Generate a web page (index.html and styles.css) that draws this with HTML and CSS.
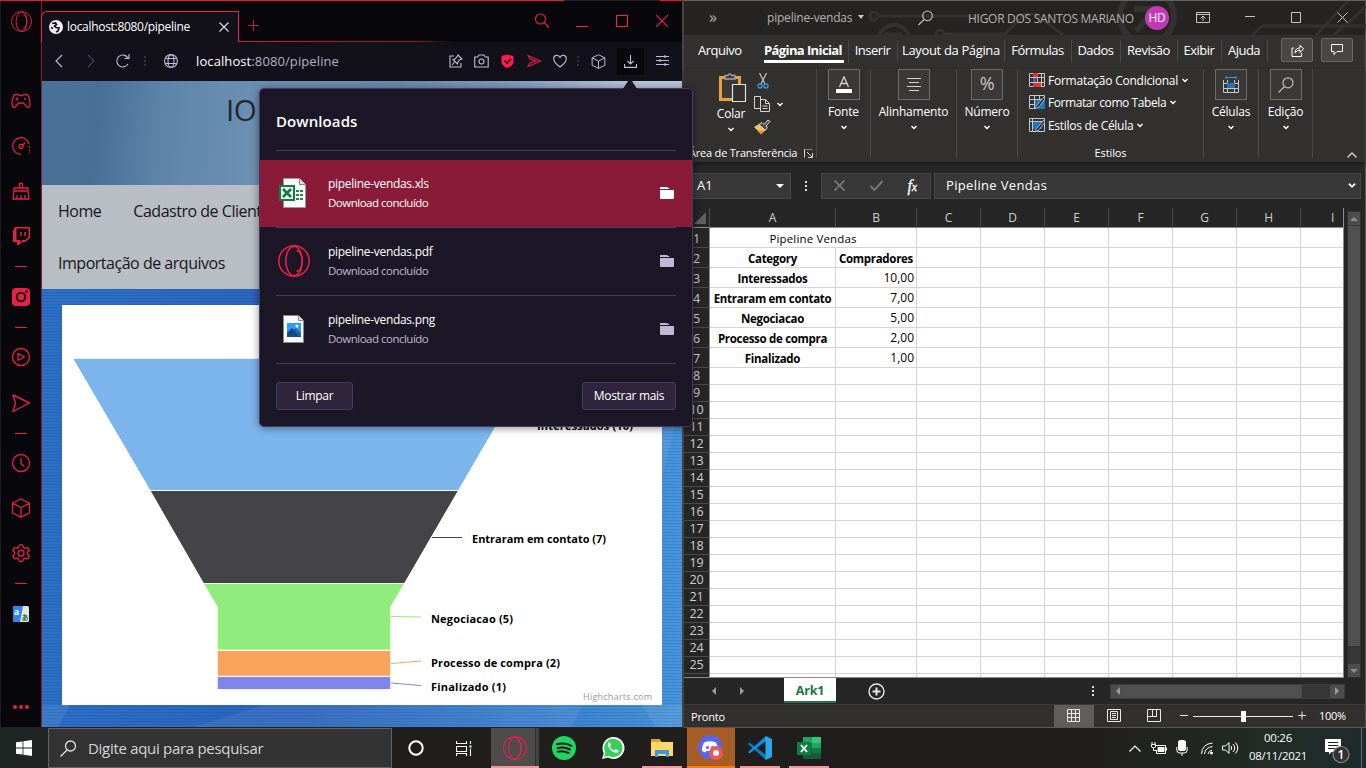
FILE: index.html
```html
<!DOCTYPE html>
<html lang="pt-BR">
<head>
<meta charset="utf-8">
<title>Pipeline</title>
<link rel="stylesheet" href="styles.css">
</head>
<body>
<svg class="defs" width="0" height="0">
  <symbol id="opera" viewBox="0 0 32 32"><g fill="none" stroke="currentColor"><circle cx="16" cy="16" r="15.2" stroke-width="1.5"/><ellipse cx="16" cy="16" rx="8.2" ry="14.6" stroke-width="1.5"/><path d="M18.500 5.500c7.500 1.500 7.500 19.500 0 21" stroke-width="1.400"/></g></symbol>
  <symbol id="chev" viewBox="0 0 8 5"><path d="M1.500 1 4 3.500 6.500 1" fill="none" stroke="currentColor" stroke-width="1.400"/></symbol>
  <symbol id="folder" viewBox="0 0 14 12"><path d="M0 0h7l3 2H0zM0 3h13.500q.5 0 .5.500V11q0 1-1 1H1q-1 0-1-1z" fill="currentColor"/></symbol>
  <symbol id="send" viewBox="0 0 20 20"><path d="M2 2 18.500 10 2 18.500 4.500 10z" fill="none" stroke="currentColor" stroke-width="1.400" stroke-linejoin="round"/></symbol>
  <symbol id="cube" viewBox="0 0 20 20"><path d="M10 1 18.500 5v10L10 19.200 1.500 15V5zM1.500 5 10 9.500 18.500 5M10 9.500v9.500" fill="none" stroke="currentColor" stroke-width="1.300" stroke-linejoin="round"/></symbol>
</svg>
<main class="windows">
  <section class="opera">
    <aside class="side">
      <div class="s-logo"><svg width="21" height="21"><use href="#opera"/></svg></div>
      <div class="s-item"><svg width="20" height="16" viewBox="0 0 20 16" class="ln"><path d="M4.500 1.500h3l1 1.200h3l1-1.200h3c2 0 3.500 5 3.500 9 0 3-1 4-2.200 4-2 0-3-4.500-4.800-4.500H8c-1.800 0-2.800 4.500-4.800 4.500C2 14.500 1 13.500 1 10.500c0-4 1.500-9 3.500-9zM6 4.500v3M4.500 6h3M13 6h2"/></svg></div>
      <div class="s-item"><svg width="20" height="20" viewBox="0 0 20 20" class="ln"><path d="M10 18.300A8.300 8.300 0 1 1 18 8M11 10l3-3.500"/><circle cx="10" cy="10.500" r="2"/><path d="M18.500 10.500v7" stroke-dasharray="1.500 1.500"/></svg></div>
      <div class="s-item"><svg width="20" height="18" viewBox="0 0 20 18" class="ln"><path d="M8.500 6V1.500h3V6M3 9V6h14v3H3L2 17h16l-1-8M6 13v4M10 13v4M14 13v4"/></svg></div>
      <div class="s-item"><svg width="18" height="18" viewBox="0 0 18 18"><path d="M3 0h15v11l-5 4h-3l-3 3H5v-3H1V4z" fill="#e4204b"/><path d="M4.500 1.500h12V10l-3 3h-3l-2.500 2V13H4.500z" fill="#0a080d"/><path d="M9 5v4M13 5v4" stroke="#e4204b" stroke-width="1.500"/></svg></div>
      <div class="s-line"></div>
      <div class="s-item tall"><svg width="18" height="18" viewBox="0 0 18 18"><rect width="18" height="18" rx="4" fill="#e4204b"/><circle cx="9" cy="9" r="4.200" fill="none" stroke="#16070d" stroke-width="2"/><circle cx="14.500" cy="3.500" r="1.200" fill="#16070d"/></svg></div>
      <div class="s-line"></div>
      <div class="s-item"><svg width="20" height="20" viewBox="0 0 20 20" class="ln"><circle cx="10" cy="10" r="8.500"/><path d="M7 6.500 13.500 9.800 7 13.500z"/></svg></div>
      <div class="s-item tall"><svg width="20" height="20"><use href="#send"/></svg></div>
      <div class="s-line"></div>
      <div class="s-item"><svg width="20" height="20" viewBox="0 0 20 20" class="ln"><circle cx="10" cy="10" r="8.500"/><path d="M10 5v5.500l3 2.500"/></svg></div>
      <div class="s-item"><svg width="20" height="20"><use href="#cube"/></svg></div>
      <div class="s-item"><svg width="20" height="20" viewBox="0 0 20 20" class="ln"><path d="M8.300 1.800h3.400l.6 2.600 1.800 1 2.500-.8 1.700 3-1.900 1.700v1.900l1.900 1.700-1.700 3-2.500-.8-1.800 1-.6 2.300H8.300l-.6-2.300-1.800-1-2.500.8-1.700-3 1.900-1.700V9.300L1.700 7.600l1.700-3 2.500.8 1.800-1z"/><circle cx="10" cy="10.200" r="3"/></svg></div>
      <div class="s-line"></div>
      <div class="s-item last"><svg width="16" height="16" viewBox="0 0 16 16"><rect width="16" height="16" rx="1.500" fill="#e6e6e6"/><path d="M1.500 0H10L7 16H1.500Q0 16 0 14.500v-13Q0 0 1.500 0z" fill="#2f86e8"/><text x="1" y="9" class="tr-a">a</text><text x="8.500" y="14" class="tr-b">あ</text></svg></div>
      <div class="s-dots"><i></i><i></i><i></i></div>
    </aside>
    <div class="browser">
      <div class="tabbar">
        <div class="tab">
          <svg width="14" height="14" viewBox="0 0 14 14"><circle cx="7" cy="7" r="7" fill="#f2f0f5"/><path d="M3 3.500 6.500 3 7.500 4.500 5.500 6 7 7.500 10 8 9 11 7 12M2 7.500l2 1" fill="none" stroke="#14111a" stroke-width="1.700"/></svg>
          <span class="tab-title">localhost:8080/pipeline</span>
          <svg class="tab-x" width="10" height="10" viewBox="0 0 10 10"><path d="M.5.500l9 9M9.500.500l-9 9" stroke="#dcd9e2" stroke-width="1.200"/></svg>
        </div>
        <div class="tab-rest">
          <svg class="plus" width="11" height="11" viewBox="0 0 11 11"><path d="M5.500 0v11M0 5.500h11" stroke="#b41f42"/></svg>
          <div class="winbtns">
            <svg width="16" height="16" viewBox="0 0 16 16" class="wb"><circle cx="6.500" cy="6" r="5"/><path d="m10.200 9.700 4.800 4.800"/></svg>
            <svg width="12" height="12" viewBox="0 0 12 12" class="wb"><path d="M0 11.500h12"/></svg>
            <svg width="12" height="12" viewBox="0 0 12 12" class="wb"><path d="M.5.500h11v11H.5z"/></svg>
            <svg width="12" height="12" viewBox="0 0 12 12" class="wb"><path d="m0 0 12 12M12 0 0 12"/></svg>
          </div>
        </div>
      </div>
      <div class="addr">
        <div class="nav-l">
          <svg width="8" height="14" viewBox="0 0 8 14" class="tb"><path d="M7 1 1 7l6 6"/></svg>
          <svg width="8" height="14" viewBox="0 0 8 14" class="tb off"><path d="m1 1 6 6-6 6"/></svg>
          <svg width="14" height="14" viewBox="0 0 14 14" class="tb"><path d="M12 10A6 6 0 1 1 12 4M8.500 4.500H13V0"/></svg>
          <span class="vdots"><i></i><i></i><i></i></span>
          <svg width="14" height="14" viewBox="0 0 14 14" class="tb"><circle cx="7" cy="7" r="6.400"/><ellipse cx="7" cy="7" rx="3" ry="6.400"/><path d="M1.500 4.500h11M1.500 9.500h11"/></svg>
        </div>
        <div class="url">localhost<span>:8080/pipeline</span></div>
        <div class="nav-r">
          <svg width="14" height="14" viewBox="0 0 14 14" class="tb"><path d="M5 2H1v11h11V9M9 1l4 4-2 .5-2 2.500-.5 2L4 5.500 6 5l2-2zM6 7.500 3 11"/></svg>
          <svg width="15" height="14" viewBox="0 0 15 14" class="tb"><path d="M.7 3h3L5 1h5l1.200 2h3v10H.7z"/><circle cx="7.500" cy="7.500" r="2.500"/></svg>
          <svg width="13" height="14" viewBox="0 0 13 14"><path d="M.5 2 6.500.500l6 1.500v7q-1.500 3.500-6 5-4.500-1.500-6-5z" fill="#fa1e4e"/><path d="m3.500 6.500 2.500 2.500 4-4" fill="none" stroke="#14111a" stroke-width="1.600"/></svg>
          <svg width="15" height="14" viewBox="0 0 15 14" class="tb red"><path d="M1 1.500 13.500 7 1 12.500 3 9l6-2-6-2z"/></svg>
          <svg width="14" height="14" viewBox="0 0 14 14" class="tb"><path d="M7 13C2 9.500.700 7 .700 4.500.700 1 5 0 7 3.500 9 0 13.300 1 13.300 4.500 13.300 7 12 9.500 7 13z"/></svg>
          <span class="vdots"><i></i><i></i><i></i></span>
          <svg width="15" height="15" class="cube"><use href="#cube"/></svg>
          <span class="dl"><svg width="13" height="13" viewBox="0 0 13 13" class="tb"><path d="M6.500 0v9M3.500 6l3 3 3-3M.5 9v3.400h12V9"/></svg></span>
          <svg width="13" height="12" viewBox="0 0 13 12" class="tb"><path d="M0 1.500h13M0 5.500h13M0 9.500h13M9 0v3M4 4v3M9 8v3"/></svg>
        </div>
      </div>
      <div class="page">
        <header class="banner">IO</header>
        <nav class="menu"><div class="menu-row"><span>Home</span><span>Cadastro de Clientes</span></div><div class="menu-row"><span>Importação de arquivos</span></div></nav>
        <div class="stage">
          <svg class="rays" width="640" height="438" viewBox="0 0 640 438"><path d="M640 105Q600 290 530 438H150Q480 350 640 60z" fill="#fff" opacity=".07"/><path d="M0 416h28l-12 22H0zM600 416l14 22h26v-22z" fill="#fff" opacity=".08"/></svg>
          <div class="chart">
            <svg width="600" height="400" viewBox="0 0 600 400">
              <g stroke="#fff" stroke-width="1">
                <path d="M10.500 53.200H473.500L396.500 185.500H88z" fill="#7cb5ec"/>
                <path d="M88 185.500H396.500L342.500 278.500H141.500z" fill="#434348"/>
                <path d="M141.500 278.500H342.500L328.800 302V345.300H155.200V302z" fill="#90ed7d"/>
                <path d="M155.200 345.300h173.600v26h-173.600z" fill="#f7a35c"/>
                <path d="M155.200 371.500h173.600v13.200h-173.600z" fill="#8085e9"/>
              </g>
              <g fill="none">
                <path d="M370 232.500h30" stroke="#434348"/><path d="M329 311.500l30 .5" stroke="#90ed7d"/>
                <path d="M329 358.500l30-2.500" stroke="#f7a35c"/><path d="M329 378l30 2.500" stroke="#8085e9"/>
              </g>
              <g class="lbl">
                <text x="475" y="125" textLength="96">Interessados (10)</text>
                <text x="410" y="238" textLength="134">Entraram em contato (7)</text>
                <text x="369" y="318" textLength="82">Negociacao (5)</text>
                <text x="369" y="362" textLength="129">Processo de compra (2)</text>
                <text x="369" y="386" textLength="75">Finalizado (1)</text>
              </g>
              <text x="521" y="395" textLength="69" class="credit">Highcharts.com</text>
            </svg>
          </div>
        </div>
      </div>
    </div>
  </section>

  <section class="excel">
    <div class="xl-title">
      <svg class="circuit" width="682" height="34" viewBox="0 0 682 34"><g fill="none" stroke="#333231" stroke-width="3"><circle cx="190" cy="15" r="4"/><path d="M194 15h100"/><circle cx="210" cy="40" r="16" stroke-width="4"/><path d="M200 33h18"/><circle cx="256" cy="33" r="4"/><path d="M261 33h60l20-20h10l28 21"/><circle cx="463" cy="15" r="27" stroke-width="6"/><path d="M450 8h20v18M452 30l18-20" stroke-width="6"/><path d="M568 34l10-9h104M632 34l32-34M650 34l32-28"/></g></svg>
      <span class="more">»</span><span class="doc">pipeline-vendas</span><i class="tri"></i>
      <svg class="t-search" width="16" height="16" viewBox="0 0 16 16" fill="none" stroke="#bdbbb9" stroke-width="1.200"><circle cx="9.500" cy="5.800" r="4.800"/><path d="M6 9.500.5 15"/></svg>
      <span class="user">HIGOR DOS SANTOS MARIANO</span><span class="avatar">HD</span>
      <div class="xl-btns">
        <svg width="14" height="11" viewBox="0 0 14 11"><path d="M.5.500h13v10H.5zM.5 2.500h13M7 9V4M4.500 6.500 7 4l2.500 2.500"/></svg>
        <svg width="11" height="11" viewBox="0 0 11 11"><path d="M0 4.500h10"/></svg>
        <svg width="11" height="11" viewBox="0 0 11 11"><path d="M.5.500h9v10h-9z"/></svg>
        <svg width="11" height="11" viewBox="0 0 11 11"><path d="m.5.500 10 10M10.500.500l-10 10"/></svg>
      </div>
    </div>
    <div class="tabs">
      <span class="rt file">Arquivo</span><span class="rt on"><b>Página Inicial</b></span><span class="rt w49">Inserir</span><span class="rt lay">Layout da Página</span><span class="rt w67">Fórmulas</span><span class="rt w49">Dados</span><span class="rt w57">Revisão</span><span class="rt w44">Exibir</span><span class="rt w46">Ajuda</span>
      <span class="rb"><svg width="13" height="13" viewBox="0 0 13 13"><path d="M3 4H1v8.500h9.500V9M4 9q0-5 5-5V1l3.500 4L9 8.500V6Q6 6 4 9z"/></svg></span>
      <span class="rb"><svg width="13" height="12" viewBox="0 0 13 12"><path d="M.5.500h11v7H6L3 10.500V7.500H.5z"/></svg></span>
    </div>
    <div class="ribbon">
      <div class="grp clip">
        <div class="clip-top">
          <div class="paste">
            <svg width="29" height="31" viewBox="0 0 29 31"><path d="M2.500 5.500h19V27.500h-19z" fill="#3a3937" stroke="#e9a13b" stroke-width="3"/><path d="M7 7V3.500h3q1.500-3 4 0h3V7z" fill="#3a3937" stroke="#a9a7a5" stroke-width="1.300"/><path d="M14.500 12.500h13v17h-13z" fill="#323130" stroke="#e2e0de" stroke-width="1.200"/></svg>
            <span>Colar</span><svg class="cv" width="8" height="5"><use href="#chev"/></svg>
          </div>
          <div class="mini">
            <svg width="12" height="16" viewBox="0 0 12 16" fill="none"><path d="M2.500 0 8 11M9.500 0 4 11" stroke="#c9c7c5" stroke-width="1.200"/><circle cx="3" cy="13" r="2" stroke="#3a96dd" stroke-width="1.400"/><circle cx="9" cy="13" r="2" stroke="#3a96dd" stroke-width="1.400"/></svg>
            <div class="copy"><svg width="16" height="16" viewBox="0 0 16 16" fill="#323130" stroke="#d6d4d2"><path d="M.5.500h6v12h-6zM6.500 3.500h5l4 4v8h-9zM11.500 3.500v4h4M8.500 10h5M8.500 12.500h5"/></svg><svg width="8" height="5"><use href="#chev"/></svg></div>
            <svg width="17" height="16" viewBox="0 0 17 16"><path d="m0 8 5-3 7 6-5 4z" fill="#f3c069"/><path d="M3 11.500h8l-4 4z" fill="#e3952f"/><path d="m5 5.500 3-2 2 2 4-4.500 2 1.500-4 4.500 1.500 2L11 11z" fill="#4a4947" stroke="#d8d6d4"/></svg>
          </div>
        </div>
        <div class="gname clipname"><span>Área de Transferência</span><svg width="9" height="9" viewBox="0 0 9 9" fill="none" stroke="#d6d4d2"><path d="M8.500 0H.5v8.500M3 3l5 5M8.500 4v4.500H4"/></svg></div>
      </div>
      <div class="grp g53"><div class="ibox"><svg width="18" height="18" viewBox="0 0 18 18"><path d="M4.500 11 9 .8 13.500 11M6 7.500h6" fill="none" stroke="#d6d4d2" stroke-width="1.300"/><path d="M1 13h16v4H1z" fill="#fff"/></svg></div><span>Fonte</span><svg class="cv" width="8" height="5"><use href="#chev"/></svg></div>
      <div class="grp g85"><div class="ibox"><svg width="14" height="14" viewBox="0 0 14 14" stroke="#d6d4d2"><path d="M0 .5h14M2 4.500h10M0 8.500h14M2 12.500h10"/></svg></div><span>Alinhamento</span><svg class="cv" width="8" height="5"><use href="#chev"/></svg></div>
      <div class="grp g60"><div class="ibox pct">%</div><span>Número</span><svg class="cv" width="8" height="5"><use href="#chev"/></svg></div>
      <div class="grp styles">
        <div class="sty s1"><svg width="16" height="15" viewBox="0 0 16 15"><path d="M.5.500h15v13H.5zM4.500 0v14M8.500 0v14M12.500 0v14M0 4.500h16M0 9.500h16" fill="none" stroke="#c9c7c5"/><path d="M4 0h5v4H4zM4 10h8v4H4z" fill="#e8322e"/><path d="M4 5h3v4H4z" fill="#1b76c8"/></svg><span>Formatação Condicional</span><svg width="8" height="5"><use href="#chev"/></svg></div>
        <div class="sty s2"><svg width="16" height="15" viewBox="0 0 16 15"><path d="M.5.500h15v13H.5zM5.500 0v14M10.500 0v14M0 4.500h16M0 9.500h16" fill="none" stroke="#c9c7c5"/><path d="M6 5h10v9H6z" fill="#1b76c8"/><path d="m5 14 3-4 7-8 1 2-6 8z" fill="#323130" stroke="#bcd" stroke-width=".8"/></svg><span>Formatar como Tabela</span><svg width="8" height="5"><use href="#chev"/></svg></div>
        <div class="sty"><svg width="16" height="15" viewBox="0 0 16 15"><path d="M.5.500h15v13H.5zM3.500 0v14M0 3.500h16" fill="none" stroke="#c9c7c5"/><path d="M4 4h9v7H4z" fill="#1b76c8"/><path d="m5 14 3-4 7-8 1 2-6 8z" fill="#323130" stroke="#bcd" stroke-width=".8"/></svg><span>Estilos de Célula</span><svg width="8" height="5"><use href="#chev"/></svg></div>
        <div class="gname">Estilos</div>
      </div>
      <div class="grp g55"><div class="ibox"><svg width="16" height="17" viewBox="0 0 16 17" fill="none"><path d="M.5 4v12.500h15V4M0 7.500h16M0 12.500h16M4.500 4v12M11.500 4v12" stroke="#c9c7c5"/><path d="M4 7h8v5H4z" fill="#1b76c8"/><path d="M3 1.500h10M3 0v3M13 0v3" stroke="#3a96dd"/></svg></div><span>Células</span><svg class="cv" width="8" height="5"><use href="#chev"/></svg></div>
      <div class="grp g54"><div class="ibox"><svg width="16" height="16" viewBox="0 0 16 16" fill="none" stroke="#bdbbb9" stroke-width="1.200"><circle cx="10" cy="5.800" r="5"/><path d="M6.500 9.500.5 15.500"/></svg></div><span>Edição</span><svg class="cv" width="8" height="5"><use href="#chev"/></svg></div>
      <svg class="fold" width="10" height="6" viewBox="0 0 10 6"><path d="M.5 5.500 5 1l4.500 4.500" fill="none" stroke="#d6d4d2" stroke-width="1.300"/></svg>
    </div>
    <div class="fbar">
      <div class="fbox name"><span>A1</span><i class="tri"></i></div>
      <span class="vdots w"><i></i><i></i><i></i></span>
      <div class="fbox fx"><svg width="11" height="11" viewBox="0 0 11 11"><path d="m.5.500 10 10M10.500.500l-10 10" stroke="#777" stroke-width="1.700"/></svg><svg width="13" height="11" viewBox="0 0 13 11"><path d="m.5 6 4 4 8-9" fill="none" stroke="#777" stroke-width="2"/></svg><em>f<small>x</small></em></div>
      <div class="fbox formula"><span>Pipeline Vendas</span><svg width="10" height="7" viewBox="0 0 8 5"><use href="#chev"/></svg></div>
    </div>
    <div class="sheet">
      <div class="grid-wrap">
      <table class="cells">
        <colgroup><col class="c0"><col class="cA"><col class="cB"><col class="c"><col class="c"><col class="c"><col class="c"><col class="c"><col class="c"><col class="c"></colgroup>
        <thead><tr><th class="corner"><svg width="12" height="12" viewBox="0 0 12 12"><path d="M12 0v12H0z" fill="#5f5f5f"/></svg></th><th>A</th><th>B</th><th>C</th><th>D</th><th>E</th><th>F</th><th>G</th><th>H</th><th>I</th></tr></thead>
        <tbody>
          <tr class="t"><th>1<td colspan="2">Pipeline Vendas<td><td><td><td><td><td><td>
          <tr class="t"><th>2<td><b>Category</b><td><b>Compradores</b><td><td><td><td><td><td><td>
          <tr class="t"><th>3<td><b>Interessados</b><td class="n">10,00<td><td><td><td><td><td><td>
          <tr class="t"><th>4<td><b>Entraram em contato</b><td class="n">7,00<td><td><td><td><td><td><td>
          <tr class="t"><th>5<td><b>Negociacao</b><td class="n">5,00<td><td><td><td><td><td><td>
          <tr class="t"><th>6<td><b>Processo de compra</b><td class="n">2,00<td><td><td><td><td><td><td>
          <tr class="t"><th>7<td><b>Finalizado</b><td class="n">1,00<td><td><td><td><td><td><td>
          <tr><th>8<td><td><td><td><td><td><td><td><td>
          <tr><th>9<td><td><td><td><td><td><td><td><td>
          <tr><th>10<td><td><td><td><td><td><td><td><td>
          <tr><th>11<td><td><td><td><td><td><td><td><td>
          <tr><th>12<td><td><td><td><td><td><td><td><td>
          <tr><th>13<td><td><td><td><td><td><td><td><td>
          <tr><th>14<td><td><td><td><td><td><td><td><td>
          <tr><th>15<td><td><td><td><td><td><td><td><td>
          <tr><th>16<td><td><td><td><td><td><td><td><td>
          <tr><th>17<td><td><td><td><td><td><td><td><td>
          <tr><th>18<td><td><td><td><td><td><td><td><td>
          <tr><th>19<td><td><td><td><td><td><td><td><td>
          <tr><th>20<td><td><td><td><td><td><td><td><td>
          <tr><th>21<td><td><td><td><td><td><td><td><td>
          <tr><th>22<td><td><td><td><td><td><td><td><td>
          <tr><th>23<td><td><td><td><td><td><td><td><td>
          <tr><th>24<td><td><td><td><td><td><td><td><td>
          <tr><th>25<td><td><td><td><td><td><td><td><td>
          <tr><th><td><td><td><td><td><td><td><td><td>
        </tbody>
      </table>
      </div>
      <div class="vscroll"><span class="sb"><i class="up"></i></span><span class="vthumb"></span><span class="sb"><i class="down"></i></span></div>
    </div>
    <div class="sheetbar">
      <i class="left"></i><i class="right"></i><span class="ark">Ark1</span>
      <svg width="17" height="17" viewBox="0 0 17 17" fill="none" stroke="#e8e8e8"><circle cx="8.500" cy="8.500" r="7.500" stroke-width="1.400"/><path d="M8.500 4.500v8M4.500 8.500h8" stroke-width="2"/></svg>
      <span class="vdots w hd"><i></i><i></i><i></i></span>
      <div class="hscroll"><span class="sb"><i class="left"></i></span><span class="hthumb"></span><span class="sb"><i class="right"></i></span></div>
    </div>
    <div class="status">
      <span class="ready">Pronto</span>
      <span class="vw on"><svg width="13" height="13" viewBox="0 0 13 13"><path d="M.5.500h12v12H.5zM4.500 0v13M8.500 0v13M0 4.500h13M0 8.500h13"/></svg></span>
      <span class="vw"><svg width="14" height="13" viewBox="0 0 14 13"><path d="M.5.500h13v12H.5zM3.500 2.500h7v8h-7zM5 4.500h4M5 6.500h4M5 8.500h4"/></svg></span>
      <span class="vw"><svg width="14" height="13" viewBox="0 0 14 13"><path d="M.5.500h13v12H.5zM5.500 0v7.500M9.500 0v7.500M0 7.500h10"/></svg></span>
      <svg class="zoomer" width="128" height="13" viewBox="0 0 128 13"><path d="M1 5.500h8M14 6.500h100M119 5.500h8M123 1.500v8" stroke="#e8e8e8"/><path d="M62 1h5v11h-5z" fill="#fff"/></svg>
      <span class="pc">100%</span>
    </div>
  </section>
</main>

<div class="popover">
  <svg class="beak" width="16" height="10" viewBox="0 0 16 10"><path d="M0 10Q2 9 3.500 6L6 2q2-3 4 0l2.500 4Q14 9 16 10z" fill="#1c1726"/></svg>
  <div class="pop-head">Downloads</div>
  <div class="row hot"><svg class="fi" width="28" height="30" viewBox="0 0 28 30"><path d="M4.500.500h16l6 6v23h-22z" fill="#fafafa" stroke="#999"/><path d="M20.500.500v6h6" fill="#ddd" stroke="#888"/><path d="M0 7h16v16H0z" fill="#107c41"/><path d="M2 9h12v12H2z" fill="#eef7f1"/><path d="m4 11 8 8M12 11l-8 8" stroke="#107c41" stroke-width="2.600"/><path d="M17 12h3v2h-3zM21 12h3v2h-3zM17 16h3v2h-3zM21 16h3v2h-3zM17 20h3v2h-3zM21 20h3v2h-3z" fill="#1b8a4c"/></svg><div class="rtx"><span>pipeline-vendas.xls</span><small>Download concluído</small></div><svg class="fo" width="14" height="12"><use href="#folder"/></svg></div>
  <div class="row"><svg class="fi op" width="32" height="32"><use href="#opera"/></svg><div class="rtx"><span>pipeline-vendas.pdf</span><small>Download concluído</small></div><svg class="fo" width="14" height="12"><use href="#folder"/></svg></div>
  <div class="row"><svg class="fi pn" width="22" height="28" viewBox="0 0 22 28"><path d="M.5.500h15l5 5v22H.5z" fill="#fafafa" stroke="#888"/><path d="M15.500.500v5h5" fill="#ddd" stroke="#888"/><path d="M4 8h14v14H4z" fill="#27a1ea"/><path d="m4 18 5-5 9 9H4z" fill="#134a86"/><path d="m10 15 3-2 5 5v4z" fill="#1d66b5"/><circle cx="14" cy="11" r="1.500" fill="#fff"/></svg><div class="rtx"><span>pipeline-vendas.png</span><small>Download concluído</small></div><svg class="fo" width="14" height="12"><use href="#folder"/></svg></div>
  <div class="pop-foot"><button class="pb">Limpar</button><button class="pb wide">Mostrar mais</button></div>
</div>

<footer class="taskbar">
  <span class="start"><svg width="16" height="16" viewBox="0 0 16 16" fill="#fff"><path d="M0 2.300 6.600 1.400v6.200H0zM7.400 1.200 16 0v7.600H7.400zM0 8.400h6.600v6.200L0 13.700zM7.400 8.400H16V16l-8.600-1.200z"/></svg></span>
  <div class="search"><svg width="17" height="17" viewBox="0 0 17 17" fill="none" stroke="#e2e2e2" stroke-width="1.300"><circle cx="10.500" cy="6" r="5"/><path d="M7 10 .5 16.500"/></svg><span>Digite aqui para pesquisar</span></div>
  <div class="apps">
    <span class="app"><svg width="16" height="16" viewBox="0 0 16 16"><circle cx="8" cy="8" r="6.700" fill="none" stroke="#fff" stroke-width="2"/></svg></span>
    <span class="app tv"><svg width="16" height="15" viewBox="0 0 16 15" fill="none" stroke="#fff" stroke-width="1.100"><path d="M.5 0v2.500h10V0M.5 5.500h10v5H.5zM.5 15v-2.500h10V15M14.500 0v3M14.500 7.500V15"/><path d="M13.500 5.500h2" stroke-width="2"/></svg></span>
    <span class="app active"><svg width="24" height="24"><use href="#opera"/></svg></span>
    <span class="app"><svg width="24" height="24" viewBox="0 0 24 24"><circle cx="12" cy="12" r="12" fill="#1ed760"/><path d="M5 8.300q7.500-2.300 14.500 1.500M5.500 12.200q6.500-2 12.500 1.300M6 15.800q5.500-1.500 10.500 1.200" fill="none" stroke="#151515" stroke-width="2" stroke-linecap="round"/></svg></span>
    <span class="app"><svg width="24" height="24" viewBox="0 0 24 24"><path d="M1 23l1.700-6A11 11 0 1 1 7 21.500z" fill="#fff"/><path d="M3 21l1.300-4.500A9.200 9.200 0 1 1 7.500 19.800z" fill="#36d159"/><path d="M8 6.500q-2 1.500-.5 4.500 2.500 4.500 7 6 3 0 3-2.500L14.500 13l-1.500 1.500q-2.500-1-4-3.500l1-1.500L9 6.500z" fill="#fff"/></svg></span>
    <span class="app ul"><svg width="22" height="19" viewBox="0 0 22 19"><path d="M0 1h9l1.500 2H22v14H0z" fill="#ffd869"/><path d="M0 0h9v3H0z" fill="#e3a21a"/><path d="M4 18v-7h14v7h-3v-3H7v3z" fill="#3a99dc"/></svg></span>
    <span class="app disc"><svg width="26" height="26" viewBox="0 0 26 26"><circle cx="12" cy="12" r="12" fill="#5865f2"/><path d="M6 7.500q6-2.500 12 0 2.500 4 2 8.500l-3.500 1.500-1-1.500H8.500l-1 1.500L4 16q-.5-4.500 2-8.500z" fill="#fff"/><circle cx="9.500" cy="12.500" r="1.600" fill="#5865f2"/><circle cx="14.500" cy="12.500" r="1.600" fill="#5865f2"/><circle cx="18" cy="18" r="7" fill="#ed5656"/><circle cx="18" cy="18" r="3" fill="#fff"/></svg></span>
    <span class="app ul"><svg width="24" height="24" viewBox="0 0 24 24"><path d="m0 8 1.500-1.500L18 19v5z" fill="#0a7cc4"/><path d="m0 16 1.500 1.500L18 5V0z" fill="#1090dc"/><path d="m17.500 0 6.500 3v18l-6.500 3z" fill="#28a8f0"/></svg></span>
    <span class="app ul"><svg width="24" height="22" viewBox="0 0 24 22"><path d="M6 0h18v22H6z" fill="#21a366"/><path d="M15 0h9v6h-9z" fill="#33c481"/><path d="M6 11h18v11H6z" fill="#185c37"/><path d="M15 11h9v5h-9zM6 6h9v5H6z" fill="#107c41"/><rect y="5" width="14" height="13" rx="1" fill="#107c41"/><path d="m4 8 6 7M10 8l-6 7" stroke="#fff" stroke-width="1.900"/></svg></span>
  </div>
  <div class="tray">
    <svg width="12" height="7" viewBox="0 0 12 7" fill="none" stroke="#fff" stroke-width="1.200"><path d="M.5 6.500 6 1l5.500 5.500"/></svg>
    <svg width="16" height="12" viewBox="0 0 16 12" fill="none" stroke="#fff"><path d="M5 3.500h9.500v8h-9V8M15.500 5.500v3M1 0v2M4 0v2M.5 2.500h4V5q-2 2-4 0zM2.500 6v2.500H5"/><path d="M7 5.500h6v4H7z" fill="#fff"/></svg>
    <svg width="12" height="16" viewBox="0 0 12 16" fill="none" stroke="#fff"><rect x="2" y="0" width="8" height="11" rx="2.500" fill="#fff" stroke="none"/><path d="M.8 7v3q0 3 3 3h4.400q3 0 3-3V7M6 13v3"/></svg>
    <svg width="14" height="14" viewBox="0 0 14 14" fill="none" stroke="#fff"><path d="M8 13q.5-3 4-4M4.500 13Q5 6.500 12.500 5.500M1.500 13Q2 3 12.500 2"/><circle cx="11.500" cy="12" r="1.500" fill="#fff" stroke="none"/></svg>
    <svg width="17" height="14" viewBox="0 0 17 14" fill="none" stroke="#fff"><path d="M.5 5v4h3l3.500 3.500v-11L3.500 5zM9 5q1.500 2 0 4M11 3q3.500 4 0 8M13.500 1.500q4.500 5.500 0 11"/></svg>
  </div>
  <div class="clock"><span>00:26</span><span>08/11/2021</span></div>
  <div class="note"><svg width="25" height="25" viewBox="0 0 25 25"><path d="M0 1h16v13H6.500L4 16.500V14H0z" fill="#fff"/><path d="M3 4.500h10M3 7.500h10M3 10.500h7" stroke="#222"/><circle cx="16" cy="16.500" r="8" fill="#333" stroke="#8b8b8b" stroke-width="1.200"/><text x="12.500" y="21" class="cnt">1</text></svg></div>
</footer>
</body>
</html>
```
FILE: styles.css
```css
* { box-sizing: border-box; }
body { margin: 0; width: 1366px; height: 768px; overflow: hidden; background: #1f1e1d; font-family: "Open Sans", "Noto Sans", sans-serif; font-size: 12px; position: relative; }
svg { display: block; flex: none; }
.defs { position: absolute; }
.windows { display: flex; height: 728px; }

/* Browser window */
.opera { width: 684px; display: flex; background: #08070b; border-right: 2px solid #454443; border-left: 1px solid #1c1b1e; border-bottom: 1px solid #222; }
.side { width: 40px; display: flex; flex-direction: column; align-items: center; color: #e4204b; }
.s-logo { height: 79px; padding-top: 11px; }
.s-item { height: 45px; display: flex; align-items: center; padding-bottom: 1px; }
.s-item.tall { height: 46px; padding: 0; }
.s-item.last { padding-top: 2px; }
.s-line { width: 12px; height: 15px; border-bottom: 1px solid #e4204b; margin-bottom: 7px; margin-top: -7px; }
.s-dots { margin-top: auto; display: flex; gap: 2px; padding-bottom: 18px; }
.s-dots i { width: 4px; height: 4px; border-radius: 50%; background: #e4204b; }
.ln { fill: none; stroke: currentColor; stroke-width: 1.3; stroke-linejoin: round; }
.tr-a { font: bold 10px "Liberation Serif", serif; fill: #fff; }
.tr-b { font: bold 7px "Noto Sans CJK JP", sans-serif; fill: #2c7a2c; }
.browser { flex: 1; display: flex; flex-direction: column; border-left: 1px solid #8e1b36; }
.tabbar { height: 42px; display: flex; border-top: 1px solid #e0202c; border-image: linear-gradient(90deg, #e0202c 563px, #222 563px, #222 659px, #f0141e 659px) 1; margin-left: -42px; padding-left: 41px; }
.tab { width: 198px; height: 31px; margin-top: 10px; background: #121019; border: 1px solid #fa1e4e; border-bottom: 0; border-top-left-radius: 6px; display: flex; align-items: center; padding: 0 9px 0 7px; color: #fff; }
.tab-title { margin-left: 4px; margin-top: -1px; font-size: 12px; letter-spacing: -.3px; }
.tab-x { margin-left: auto; }
.tab-rest { flex: 1; display: flex; align-items: flex-start; justify-content: space-between; background: linear-gradient(90deg, #c01c40, #8e1b36 40%, transparent 215px) 0 100% / 100% 1px no-repeat; }
.plus { margin: 19px 0 0 9px; }
.winbtns { display: flex; align-items: center; padding: 12px 14px 0 0; }
.winbtns .wb { margin-right: 28px; }
.winbtns .wb:first-child { margin-right: 26px; }
.winbtns .wb:last-child { margin-right: 0; }
.wb { fill: none; stroke: #fa1e4e; stroke-width: 1.1; }
.addr { height: 39px; background: #121019; display: flex; align-items: center; justify-content: space-between; padding-bottom: 1px; }
.nav-l { display: flex; align-items: center; padding-left: 13px; width: 154px; flex: none; }
.nav-l svg:nth-child(2) { margin-left: 24px; }
.nav-l svg:nth-child(3) { margin-left: 21px; }
.nav-l .vdots { margin: 0 18px 0 14px; }
.tb { fill: none; stroke: #c3bcd6; stroke-width: 1.1; }
.tb.off { stroke: #4a4656; }
.tb.red { stroke: #e4204b; }
.vdots { display: flex; flex-direction: column; gap: 2px; }
.vdots i { width: 2px; height: 2px; background: #35313f; }
.vdots.w i { background: #e0e0e0; }
.url { flex: 1; font-size: 13px; color: #fff; letter-spacing: .1px; }
.url span { color: #b6b0c6; }
.nav-r { display: flex; align-items: center; padding-right: 13px; color: #c3bcd6; }
.nav-r > * { margin-left: 11px; }
.nav-r > svg:nth-child(3) { margin-left: 12px; }
.nav-r > svg:nth-child(4) { margin-left: 13px; }
.nav-r > .vdots { margin-left: 9px; }
.nav-r > svg.cube { margin-left: 12px; }
.nav-r > .dl { margin: 0 0 0 11px; width: 27px; height: 27px; background: #08070b; display: flex; align-items: center; justify-content: center; }
.nav-r > .dl + svg { margin-left: 12px; }
.nav-r > svg:nth-child(5) { margin-right: 1px; }
.page { flex: 1; min-height: 0; display: flex; flex-direction: column; }
.banner { height: 104px; flex: none; background: linear-gradient(95deg, #4a7199 0, #486f97 9%, #5f86aa 20%, #6c90b3 34%, #6b8db0 55%, #7f9dbf 72%, #b9c6dd 92%); color: #24282c; font-size: 29.500px; font-weight: 500; padding: 9px 0 0 184px; line-height: 40px; letter-spacing: -.5px; }
.menu { height: 104px; flex: none; background: #b9bdc4; color: #16181b; font-size: 16px; }
.menu-row { height: 52px; line-height: 52px; display: flex; gap: 32px; padding-left: 16px; letter-spacing: -.48px; overflow: hidden; white-space: nowrap; }
.stage { flex: 1; position: relative; background: repeating-linear-gradient(rgba(0,20,80,.12) 0 1px, transparent 1px 3px), linear-gradient(90deg, #2d70c8, #2a66bd 40%, #3277c9 65%, #4795da); padding: 16px 20px; }
.rays { position: absolute; left: 0; top: 0; }
.chart { position: relative; width: 600px; height: 400px; background: #fff; }
.lbl { font: bold 11px "Open Sans", sans-serif; fill: #000; }
.credit { font: 9px "Open Sans", sans-serif; fill: #999; }

/* Spreadsheet window */
.excel { width: 682px; display: flex; flex-direction: column; background: #262626; border-top: 1px solid #636261; border-bottom: 1px solid #5a5958; border-right: 1px solid #5a5958; color: #fff; font-size: 12px; letter-spacing: -.2px; }
.xl-title { height: 34px; flex: none; background: #252423; display: flex; align-items: center; position: relative; color: #b3b1af; font-size: 12px; padding-bottom: 2px; }
.circuit { position: absolute; left: 0; top: 0; }
.xl-title > :not(.circuit) { position: relative; }
.more { margin-left: 25px; font-size: 16px; width: 58px; line-height: 20px; }
.doc { width: 85px; margin-top: 1px; white-space: nowrap; }
.tri { border: 3.500px solid transparent; border-top: 4px solid #c8c6c4; border-bottom: 0; margin-left: 6px; }
.t-search { margin-left: 54px; margin-top: 2px; }
.user { margin-left: 34px; margin-top: 2px; width: 167px; white-space: nowrap; letter-spacing: -.28px; }
.avatar { margin-left: 10px; margin-top: 2px; width: 24px; height: 24px; border-radius: 50%; background: #c239b3; color: #fff; text-align: center; line-height: 24px; font-size: 12px; }
.xl-btns { display: flex; align-items: center; margin-left: 27px; gap: 35px; fill: none; stroke: #c8c6c4; }
.tabs { height: 34px; flex: none; background: #323130; display: flex; align-items: flex-start; font-size: 13px; letter-spacing: -.5px; padding-top: 3px; }
.rt { height: 22px; line-height: 20px; border-right: 1px solid #494846; margin-top: 2px; text-align: center; white-space: nowrap; overflow: hidden; flex: none; padding-right: 1px; }
.rt.file { width: 74px; border: 0; text-align: left; padding-left: 14px; }
.rt.on { width: 91px; height: 23px; padding-left: 6px; text-align: left; letter-spacing: -.6px; }
.rt.on b { display: block; width: 80px; border-bottom: 3px solid #fff; line-height: 18px; height: 23px; padding-top: 1px; font-weight: 700; }
.w49 { width: 49px; } .w67 { width: 67px; } .w57 { width: 57px; } .w44 { width: 44px; } .w46 { width: 46px; }
.rt.lay { width: 107px; padding: 0 4px; text-align: left; letter-spacing: -.35px; }
.rb { width: 32px; height: 24px; border: 1px solid #686765; border-radius: 2px; background: #484745; display: flex; align-items: center; justify-content: center; margin-left: 8px; flex: none; fill: none; stroke: #fff; }
.w46 + .rb { margin-left: 13px; }
.ribbon { height: 93px; flex: none; background: #323130; display: flex; align-items: flex-start; border-bottom: 0; box-shadow: 0 2px 3px #1a1a1a; position: relative; }
.grp { height: 89px; border-right: 1px solid #4a4947; display: flex; flex-direction: column; align-items: center; font-size: 12px; flex: none; white-space: nowrap; }
.grp > span { margin-top: 3px; line-height: 18px; }
.cv { margin-top: 4px; }
.ibox { width: 32px; height: 31px; border: 1px solid #6d6c6a; background: #3a3938; display: flex; align-items: center; justify-content: center; }
.pct { font-size: 18px; color: #c8c6c4; line-height: 26px; padding-bottom: 3px; }
.clip { width: 133px; align-items: stretch; }
.clip-top { display: flex; padding-left: 34px; height: 76px; flex: none; }
.paste { width: 29px; display: flex; flex-direction: column; align-items: center; padding-top: 3px; }
.paste span { line-height: 18px; margin-top: 2px; margin-left: -3px; }
.paste .cv { margin-left: -4px; }
.mini { margin-left: 7px; padding-top: 4px; display: flex; flex-direction: column; gap: 7px; }
.mini > :first-child { margin-left: 3px; }
.copy { display: flex; align-items: center; gap: 6px; }
.gname { font-size: 11px; line-height: 16px; height: 16px; letter-spacing: -.1px; flex: none; }
.clipname { display: flex; align-items: center; gap: 7px; padding-left: 5px; white-space: nowrap; letter-spacing: -.2px; }
.g53 { width: 54px; } .g85 { width: 86px; } .g60 { width: 61px; } .g55 { width: 55px; } .g54 { width: 54px; }
.styles { width: 186px; align-items: stretch; padding-left: 11px; }
.sty { display: flex; align-items: center; height: 23px; gap: 3px; letter-spacing: -.3px; flex: none; }
.sty.s1 { height: 22px; letter-spacing: -.24px; }
.sty.s2 { height: 23px; letter-spacing: -.42px; }
.styles .gname { text-align: center; margin: 8px 11px 0 0; }
.fold { margin: 83px 0 0 34px; }
.fbar { height: 46px; flex: none; display: flex; align-items: center; padding-top: 1px; position: relative; }
.fbox { height: 26px; border: 1px solid #474747; background: #383838; display: flex; align-items: center; font-size: 13px; }
.fbox span { margin-top: -1px; }
.name { width: 107px; justify-content: space-between; padding: 0 6px 0 12px; letter-spacing: 0; }
.name .tri { border-width: 4px 4px 0; border-top-color: #fff; }
.fbar .vdots { margin: 0 14px 0 14px; }
.fx { width: 110px; justify-content: space-between; padding: 0 13px 0 12px; }
.fx em { font: italic 16px "Liberation Serif", serif; -webkit-text-stroke: .3px #fff; }
.fx small { font-size: 12px; }
.formula { width: 427px; margin-left: 3px; justify-content: space-between; padding: 0 3px 0 11px; letter-spacing: .35px; }
.sheet { height: 470px; flex: none; display: flex; justify-content: space-between; padding-right: 4px; }
.grid-wrap { width: 660px; overflow: hidden; border-right: 1px solid #8a8a8a; border-bottom: 1px solid #8a8a8a; }
.cells { width: 680px; table-layout: fixed; border-collapse: separate; border-spacing: 0; background: #fff; color: #000; }
.c0 { width: 26px; } .cA { width: 126px; } .cB { width: 81px; } .c { width: 64px; }
.cells thead th { height: 20px; background: #262626; color: #cfcfcf; font-weight: 400; font-size: 12px; line-height: 19px; padding: 0; border-right: 1px solid #4b4b4b; border-bottom: 1px solid #8a8a8a; }
.cells .corner svg { margin-left: 10px; }
.cells tbody th { background: #262626; color: #cfcfcf; font-weight: 400; font-size: 12.500px; border-right: 1px solid #8a8a8a; border-bottom: 1px solid #4b4b4b; }
.cells tbody th, .cells td { height: 17px; line-height: 14px; padding: 0; overflow: hidden; white-space: nowrap; }
.cells td { border-right: 1px solid #d4d4d4; border-bottom: 1px solid #d4d4d4; text-align: center; font-size: 11.500px; letter-spacing: .15px; }
.cells td b { letter-spacing: -.3px; font-size: 11.500px; }
.cells .t th, .cells .t td { height: 20px; line-height: 17px; padding-top: 2px; }
.cells .t td.n { text-align: right; padding: 0 2px 0 0; line-height: 19px; font-size: 12px; letter-spacing: 0; }
.vscroll { width: 14px; display: flex; flex-direction: column; background: #363636; margin-top: 3px; border: 1px solid #303030; }
.sb { width: 12px; height: 13px; background: #4d4d4d; display: flex; align-items: center; justify-content: center; flex: none; }
.vthumb { height: 420px; background: #505050; margin: 1px 0 auto; }
.up { border: 4px solid transparent; border-bottom-color: #8d8d8d; border-top: 0; }
.down { border: 4px solid transparent; border-top-color: #8d8d8d; border-bottom: 0; }
.left { border: 4px solid transparent; border-right-color: #9b9b9b; border-left: 0; }
.right { border: 4px solid transparent; border-left-color: #9b9b9b; border-right: 0; }
.sheetbar { height: 27px; flex: none; display: flex; align-items: center; border-bottom: 1px solid #3a3a3a; }
.sheetbar > .left { margin-left: 28px; }
.sheetbar > .right { margin-left: 24px; }
.ark { align-self: flex-start; width: 52px; height: 25px; background: #fff; border-bottom: 2px solid #217346; color: #217346; font-weight: 700; font-size: 12.500px; line-height: 25px; text-align: center; margin: 0 32px 0 40px; }
.hd { margin-left: 207px; }
.hscroll { margin-left: 16px; width: 235px; height: 15px; border: 1px solid #3c3c3c; background: #363636; display: flex; align-items: stretch; justify-content: space-between; }
.hscroll .sb { width: 14px; height: 13px; }
.hthumb { width: 177px; background: #505050; margin-right: 28px; }
.status { flex: 1; background: #32302f; display: flex; align-items: center; font-size: 11px; }
.ready { width: 363px; padding-left: 7px; margin-right: 7px; }
.vw { width: 40px; height: 22px; display: flex; align-items: center; justify-content: center; fill: none; stroke: #e8e8e8; padding: 0 1px 1px 0; }
.vw.on { background: #5f5e5c; }
.zoomer { margin-left: 5px; }
.pc { margin-left: 12px; letter-spacing: -.25px; margin-top: -1px; }

/* Downloads panel floating over both windows */
.popover { position: absolute; left: 259px; top: 88px; width: 434px; height: 339px; background: #1c1726; border: 1px solid #473b62; border-radius: 5px; box-shadow: 0 1px 8px rgba(0,0,0,.45); color: #fff; }
.beak { position: absolute; left: 362px; top: -10px; }
.pop-head { height: 62px; margin: 0 16px 9px; border-bottom: 1px solid #473b62; font-size: 15px; font-weight: 600; line-height: 64px; letter-spacing: .1px; }
.row { height: 68px; display: flex; align-items: center; padding: 0 18px 2px 16px; position: relative; background: linear-gradient(#473b62, #473b62) 16px 67px / 400px 1px no-repeat; color: #c0b8d4; }
.row.hot { background: linear-gradient(#473b62, #473b62) 16px 67px / 400px 1px no-repeat, linear-gradient(#8a1b38, #8a1b38) 0 0 / 100% 67px no-repeat; color: #fff; }
.fi { margin: 0 21px 0 3px; }
.fi.op { margin: 0 18px 0 2px; color: #f01e4a; }
.fi.pn { margin: 0 23px 0 7px; }
.rtx { display: flex; flex-direction: column; flex: 1; letter-spacing: -.3px; }
.rtx span { color: #fff; font-size: 12px; line-height: 19px; }
.rtx small { font-size: 11.500px; line-height: 19px; letter-spacing: -.5px; }
.pop-foot { display: flex; justify-content: space-between; padding: 18px 16px; }
.pb { width: 77px; height: 28px; padding: 0 0 1px; border: 1px solid #473b62; border-radius: 3px; background: #2e253d; color: #fff; font: 12px "Open Sans", sans-serif; letter-spacing: -.3px; }
.pb.wide { width: 94px; }

/* Taskbar */
.taskbar { height: 40px; display: flex; background: linear-gradient(90deg, #202624, #1f1e1c 25%, #201f1e 80%, #222b26 93%, #1f2a2c); color: #fff; }
.start { width: 48px; display: flex; align-items: center; justify-content: center; }
.search { width: 344px; border: 1px solid #606060; background: #333; display: flex; align-items: center; padding-left: 11px; gap: 11px; font-size: 15px; color: #d6d6d6; letter-spacing: -.3px; }
.apps { display: flex; }
.app { width: 48px; margin-right: 1px; display: flex; align-items: center; justify-content: center; position: relative; }
.app:first-child { margin: 0; }
.app.tv { margin-right: 3px; }
.app.active { background: linear-gradient(#f9929b, #f9929b) 0 38px / 100% 2px no-repeat, linear-gradient(90deg, #4c4c4b 44px, #2e2e2d 44px, #2e2e2d 45px, #444443 45px); color: #e4204b; }
.app.ul { background: linear-gradient(#f9929b, #f9929b) 4px 38px / 40px 2px no-repeat; }
.app.disc { background: linear-gradient(#ff7a00, #ff7a00) 0 38px / 100% 2px no-repeat, #a65e26; }
.tray { margin-left: auto; display: flex; align-items: center; gap: 10px; }
.tray svg:nth-child(3) { margin-left: -1px; }
.tray svg:nth-child(4) { margin-left: 2px; }
.tray svg:nth-child(5) { margin-left: -2px; }
.clock { width: 78px; display: flex; flex-direction: column; align-items: center; font-size: 11.500px; line-height: 18px; letter-spacing: -.3px; padding-top: 1px; }
.note { width: 45px; margin-right: 4px; border-right: 1px solid #666; padding: 10px 0 0 8px; }
.cnt { font: 600 12px "Open Sans", sans-serif; fill: #fff; }
```
